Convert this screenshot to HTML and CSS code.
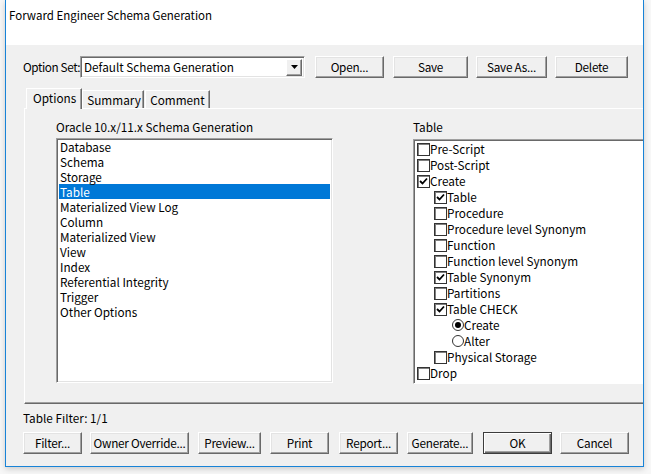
FILE: index.html
```html
<!DOCTYPE html>
<html>
<head>
<meta charset="utf-8">
<link rel="stylesheet" href="styles.css">
</head>
<body>
<div class="window">
  <div class="titlebar">Forward Engineer Schema Generation</div>
  <div class="client">
    <div class="optrow">
      <span class="optlabel">Option Set:</span>
      <div class="combo">
        <span class="combo-text">Default Schema Generation</span>
        <span class="combo-btn"><svg width="7" height="4" viewBox="0 0 7 4"><path d="M0 0H7L3.5 4Z" fill="#000"/></svg></span>
      </div>
      <button class="btn b-open">Open...</button>
      <button class="btn b-save">Save</button>
      <button class="btn b-saveas">Save As...</button>
      <button class="btn b-delete">Delete</button>
    </div>
    <div class="tabs">
      <div class="tab active">Options</div>
      <div class="tab t-summary">Summary</div>
      <div class="tab t-comment">Comment</div>
    </div>
    <div class="panel">
      <div class="col col-left">
        <div class="heading">Oracle 10.x/11.x Schema Generation</div>
        <div class="listbox">
          <div class="li">Database</div>
          <div class="li">Schema</div>
          <div class="li">Storage</div>
          <div class="li sel">Table</div>
          <div class="li">Materialized View Log</div>
          <div class="li">Column</div>
          <div class="li">Materialized View</div>
          <div class="li">View</div>
          <div class="li">Index</div>
          <div class="li">Referential Integrity</div>
          <div class="li">Trigger</div>
          <div class="li">Other Options</div>
        </div>
      </div>
      <div class="col col-right">
        <div class="heading">Table</div>
        <div class="tree">
          <div class="tr l1"><span class="cb"></span><span class="lbl">Pre-Script</span></div>
          <div class="tr l1"><span class="cb"></span><span class="lbl">Post-Script</span></div>
          <div class="tr l1"><span class="cb on"><svg width="9" height="9" viewBox="0 0 9 9"><path d="M1 4L3.5 6.5L8 1.5" fill="none" stroke="#000" stroke-width="1.8"/></svg></span><span class="lbl">Create</span></div>
          <div class="tr l2"><span class="cb on"><svg width="9" height="9" viewBox="0 0 9 9"><path d="M1 4L3.5 6.5L8 1.5" fill="none" stroke="#000" stroke-width="1.8"/></svg></span><span class="lbl">Table</span></div>
          <div class="tr l2"><span class="cb"></span><span class="lbl">Procedure</span></div>
          <div class="tr l2"><span class="cb"></span><span class="lbl">Procedure level Synonym</span></div>
          <div class="tr l2"><span class="cb"></span><span class="lbl">Function</span></div>
          <div class="tr l2"><span class="cb"></span><span class="lbl">Function level Synonym</span></div>
          <div class="tr l2"><span class="cb on"><svg width="9" height="9" viewBox="0 0 9 9"><path d="M1 4L3.5 6.5L8 1.5" fill="none" stroke="#000" stroke-width="1.8"/></svg></span><span class="lbl">Table Synonym</span></div>
          <div class="tr l2"><span class="cb"></span><span class="lbl">Partitions</span></div>
          <div class="tr l2"><span class="cb on"><svg width="9" height="9" viewBox="0 0 9 9"><path d="M1 4L3.5 6.5L8 1.5" fill="none" stroke="#000" stroke-width="1.8"/></svg></span><span class="lbl">Table CHECK</span></div>
          <div class="tr l3"><span class="rb on"></span><span class="lbl">Create</span></div>
          <div class="tr l3"><span class="rb"></span><span class="lbl">Alter</span></div>
          <div class="tr l2"><span class="cb"></span><span class="lbl">Physical Storage</span></div>
          <div class="tr l1"><span class="cb"></span><span class="lbl">Drop</span></div>
        </div>
      </div>
    </div>
    <div class="filter"><span>Table Filter: 1/1</span></div>
    <div class="btnrow">
      <button class="btn w-filter">Filter...</button>
      <button class="btn w-owner">Owner Override...</button>
      <button class="btn w-preview">Preview...</button>
      <button class="btn w-print">Print</button>
      <button class="btn w-report">Report...</button>
      <button class="btn w-generate">Generate...</button>
      <button class="btn default w-ok">OK</button>
      <button class="btn w-cancel">Cancel</button>
    </div>
  </div>
</div>
</body>
</html>
```

FILE: styles.css
```css
* { box-sizing: border-box; }
html, body { margin: 0; padding: 0; }
body {
  width: 651px;
  height: 474px;
  background: #f7f7f7;
  font-family: "Noto Sans CJK KR", "Noto Sans", sans-serif;
  font-size: 11.75px;
  color: #000;
  overflow: hidden;
}
.window {
  margin-left: 5px;
  width: 639px;
  height: 467px;
  border: 1px solid #1883d7;
  border-top: none;
  background: #f0f0f0;
  overflow: hidden;
  box-shadow: 0 2px 6px rgba(0,0,0,0.18);
}
.titlebar {
  height: 45px;
  background: #fff;
  padding: 7px 0 0 3px;
  font-size: 11.5px;
  line-height: 16px;
  white-space: nowrap;
}
.client {
  height: 421px;
  background: #f0f0f0;
  display: flex;
  flex-direction: column;
}
.optrow {
  display: flex;
  align-items: center;
  margin-top: 11px;
  height: 22px;
  padding-left: 17px;
  white-space: nowrap;
}
.optlabel { width: 57px; flex: none; line-height: 16px; letter-spacing: -0.4px; }
.combo {
  width: 225px;
  height: 22px;
  background: #fff;
  border: 1px solid;
  border-color: #a0a0a0 #fff #fff #a0a0a0;
  box-shadow: inset 1px 1px 0 #696969, inset -1px -1px 0 #e3e3e3;
  display: flex;
  align-items: center;
  padding: 0 2px 0 2px;
  margin-right: 10px;
}
.combo-text { flex: 1; padding-left: 1px; line-height: 16px; }
.combo-btn {
  width: 16px;
  height: 17px;
  background: #f0f0f0;
  border: 1px solid;
  border-color: #fff #696969 #696969 #fff;
  box-shadow: inset -1px -1px 0 #a0a0a0;
  display: flex;
  align-items: center;
  justify-content: center;
}
.btn {
  font: inherit;
  color: #000;
  height: 22px;
  padding: 0;
  margin: 0;
  background: #f0f0f0;
  border: 1px solid;
  border-color: #fff #696969 #696969 #fff;
  box-shadow: inset -1px -1px 0 #a0a0a0, inset 1px 1px 0 #e3e3e3;
  line-height: 16px;
  text-align: center;
  white-space: nowrap;
  letter-spacing: -0.25px;
}
.b-open { width: 69px; margin-right: 9px; }
.b-save { width: 75px; margin-right: 8px; }
.b-saveas { width: 71px; margin-right: 8px; }
.b-delete { width: 73px; }
.tabs {
  display: flex;
  align-items: flex-end;
  margin-top: 10px;
  padding-left: 20px;
  height: 20px;
  position: relative;
  z-index: 1;
  white-space: nowrap;
}
.tab {
  height: 18px;
  border: 1px solid;
  border-bottom: none;
  border-color: #fff #696969 #fff #fff;
  box-shadow: inset -1px 0 0 #a0a0a0;
  padding: 0 5px 0 4px;
  line-height: 17px;
  background: #f0f0f0;
}
.tab.active {
  height: 21px;
  margin-bottom: -1px;
  padding: 0 5px 0 6px;
  line-height: 17px;
}
.t-summary { width: 62px; }
.t-comment { width: 65px; margin-left: 1px; }
.panel {
  margin-left: 18px;
  width: 640px;
  height: 296px;
  border: 1px solid;
  border-color: #fff #696969 #696969 #fff;
  box-shadow: inset 0 -1px 0 #a0a0a0;
  display: grid;
  grid-template-columns: 277px 1fr;
  column-gap: 80px;
  padding: 10px 0 0 31px;
}
.heading { height: 20px; line-height: 16px; white-space: nowrap; }
.listbox {
  margin-top: -1px;
  height: 245px;
  background: #fff;
  border: 1px solid;
  border-color: #a0a0a0 #fff #fff #a0a0a0;
  box-shadow: inset 1px 1px 0 #696969, inset -1px -1px 0 #e3e3e3;
  padding: 0 2px 0 2px;
}
.li { height: 15px; line-height: 15px; padding-left: 1px; white-space: nowrap; }
.li.sel { background: #0078d7; color: #fff; }
.tree {
  height: 245px;
  background: #fff;
  border: 1px solid;
  border-color: #a0a0a0 #fff #fff #a0a0a0;
  box-shadow: inset 1px 1px 0 #696969;
  padding: 1px 0 0 3px;
}
.tr {
  height: 16px;
  display: flex;
  align-items: center;
  white-space: nowrap;
}
.lbl { line-height: 16px; }
.l2 { padding-left: 17px; }
.l3 { padding-left: 34px; }
.cb {
  width: 13px;
  height: 13px;
  border: 1px solid #333;
  box-shadow: inset 1px 1px 0 #808080;
  background: #fff;
  display: flex;
  align-items: center;
  justify-content: center;
  flex: none;
}
.cb svg { display: block; }
.rb {
  width: 12px;
  height: 12px;
  border: 1px solid #333;
  border-radius: 50%;
  margin-left: 1px;
  background: #fff;
  flex: none;
  position: relative;
}
.rb.on::after {
  content: "";
  position: absolute;
  left: 2px;
  top: 2px;
  width: 6px;
  height: 6px;
  border-radius: 50%;
  background: #000;
}
.filter {
  margin-top: 10px;
  margin-left: 17px;
  height: 12px;
  overflow: hidden;
}
.filter span {
  display: block;
  line-height: 14px;
  margin-top: -3px;
  white-space: nowrap;
}
.btnrow {
  display: flex;
  margin-top: 6px;
  padding-left: 17px;
}
.w-filter { width: 59px; margin-right: 8px; }
.w-owner { width: 99px; margin-right: 9px; }
.w-preview { width: 63px; margin-right: 9px; }
.w-print { width: 59px; margin-right: 10px; }
.w-report { width: 59px; margin-right: 9px; }
.w-generate { width: 66px; margin-right: 10px; }
.w-ok { width: 69px; margin-right: 8px; }
.w-cancel { width: 69px; }
.btn.default {
  border: 1px solid #3c3c3c;
  box-shadow: inset 1px 1px 0 #fff, inset -1px -1px 0 #696969, inset -2px -2px 0 #a0a0a0;
}
```
